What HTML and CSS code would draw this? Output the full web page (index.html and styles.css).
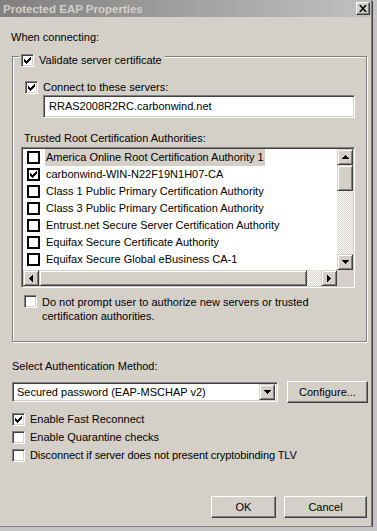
FILE: index.html
```html
<!DOCTYPE html>
<html lang="en">
<head>
    <meta charset="UTF-8">
    <title>Protected EAP Properties</title>
    <link rel="stylesheet" href="styles.css">
</head>
<body>
    <div class="window">
        <div class="titlebar">
            <span class="title">Protected EAP Properties</span>
            <span class="close">
                <svg width="8" height="7" viewBox="0 0 8 7"><path d="M0 0h2l2 2.5 2-2.5h2L5 3.5 8 7H6L4 4.5 2 7H0l3-3.5z" fill="#000"/></svg>
            </span>
        </div>

        <div class="content">
            <div class="text when">When connecting:</div>

            <div class="group">
                <div class="legend">
                    <span class="box checked"></span>
                    <span>Validate server certificate</span>
                </div>

                <div class="check connect">
                    <span class="box checked"></span>
                    <span>Connect to these servers:</span>
                </div>

                <div class="field">RRAS2008R2RC.carbonwind.net</div>

                <div class="text trusted">Trusted Root Certification Authorities:</div>

                <div class="listbox">
                    <ul class="items">
                        <li><span class="flatbox"></span><span class="name selected">America Online Root Certification Authority 1</span></li>
                        <li><span class="flatbox checked"></span><span class="name">carbonwind-WIN-N22F19N1H07-CA</span></li>
                        <li><span class="flatbox"></span><span class="name">Class 1 Public Primary Certification Authority</span></li>
                        <li><span class="flatbox"></span><span class="name">Class 3 Public Primary Certification Authority</span></li>
                        <li><span class="flatbox"></span><span class="name">Entrust.net Secure Server Certification Authority</span></li>
                        <li><span class="flatbox"></span><span class="name">Equifax Secure Certificate Authority</span></li>
                        <li><span class="flatbox"></span><span class="name">Equifax Secure Global eBusiness CA-1</span></li>
                    </ul>
                    <div class="vscroll">
                        <span class="sbtn arrow-up"></span>
                        <span class="vthumb"></span>
                        <span class="track"></span>
                        <span class="sbtn arrow-down"></span>
                    </div>
                    <div class="hscroll">
                        <span class="sbtn arrow-left"></span>
                        <span class="hthumb"></span>
                        <span class="track"></span>
                        <span class="sbtn arrow-right"></span>
                    </div>
                    <div class="corner"></div>
                </div>

                <div class="check noprompt">
                    <span class="box"></span>
                    <span>Do not prompt user to authorize new servers or trusted<br>certification authorities.</span>
                </div>
            </div>

            <div class="text select">Select Authentication Method:</div>

            <div class="method-row">
                <div class="combo">
                    <span class="combo-text">Secured password (EAP-MSCHAP v2)</span>
                    <span class="sbtn arrow-down combo-btn"></span>
                </div>
                <button class="btn configure">Configure...</button>
            </div>

            <div class="options">
                <div class="check"><span class="box checked"></span><span>Enable Fast Reconnect</span></div>
                <div class="check"><span class="box"></span><span>Enable Quarantine checks</span></div>
                <div class="check"><span class="box"></span><span class="tight">Disconnect if server does not present cryptobinding TLV</span></div>
            </div>

            <div class="actions">
                <button class="btn ok">OK</button>
                <button class="btn cancel">Cancel</button>
            </div>
        </div>
    </div>
</body>
</html>
```

FILE: styles.css
```css
html {
    background-color: #c4c4c4;
}

body {
    margin: 0;
    font-family: "Liberation Sans", Arial, sans-serif;
    font-size: 11px;
    color: #000;
}

.window {
    width: 372px;
    height: 527px;
    background-color: #d4d0c8;
    border-right: 1px solid #808080;
    border-bottom: 1px solid #808080;
    box-shadow: 1px 1px 0 #404040;
    box-sizing: border-box;
}

.titlebar {
    height: 17px;
    background: linear-gradient(to right, #808080, #c0c0c0);
    display: flex;
    align-items: center;
    justify-content: space-between;
    padding: 0 0 0 3px;
}

.title {
    color: #d4d0c8;
    font-weight: bold;
    font-size: 11.5px;
}

.close {
    width: 14px;
    height: 13px;
    margin-right: 1px;
    box-sizing: border-box;
    display: flex;
    align-items: center;
    justify-content: center;
    border: 1px solid;
    border-color: #fff #404040 #404040 #fff;
    box-shadow: inset -1px -1px 0 #808080;
    background-color: #d4d0c8;
}

.content {
    padding: 0 0 0 12px;
}

.text {
    line-height: 13px;
    white-space: nowrap;
}

.when {
    margin-top: 14px;
    margin-left: -1px;
}

/* group box with etched border */
.group {
    margin-top: 12px;
    width: 355px;
    height: 286px;
    box-sizing: border-box;
    border: 1px solid #808080;
    box-shadow: inset 1px 1px 0 #fff, 1px 1px 0 #fff;
    padding: 0 0 0 12px;
}

.legend {
    display: inline-flex;
    align-items: center;
    gap: 5px;
    margin-top: -9px;
    margin-left: -6px;
    padding: 0 3px 0 2px;
    background-color: #d4d0c8;
    line-height: 13px;
    white-space: nowrap;
}

.check {
    display: flex;
    align-items: center;
    gap: 5px;
    line-height: 13px;
    white-space: nowrap;
}

.box {
    width: 13px;
    height: 13px;
    flex: none;
    box-sizing: border-box;
    background-color: #fff;
    border: 1px solid;
    border-color: #808080 #fff #fff #808080;
    box-shadow: inset 1px 1px 0 #404040, inset -1px -1px 0 #d4d0c8;
}

.box.checked,
.flatbox.checked {
    background-image: url("data:image/svg+xml;utf8,<svg xmlns='http://www.w3.org/2000/svg' width='7' height='7'><path d='M0 2h1v1h1v1h1V3h1V2h1V1h1V0h1v3H6v1H5v1H4v1H3v1H2V6H1V5H0z' fill='black'/></svg>");
    background-repeat: no-repeat;
    background-position: 2px 2px;
}

.connect {
    margin-top: 12px;
}

.field {
    margin-top: 1px;
    margin-left: 18px;
    width: 312px;
    height: 23px;
    box-sizing: border-box;
    background-color: #fff;
    border: 1px solid;
    border-color: #808080 #fff #fff #808080;
    box-shadow: inset 1px 1px 0 #404040, inset -1px -1px 0 #d4d0c8;
    padding: 0 0 0 5px;
    line-height: 21px;
}

.trusted {
    margin-top: 14px;
    margin-left: -1px;
}

/* certificate list */
.listbox {
    margin-top: 2px;
    margin-left: -4px;
    width: 334px;
    height: 141px;
    box-sizing: border-box;
    border: 1px solid;
    border-color: #808080 #fff #fff #808080;
    box-shadow: inset 1px 1px 0 #404040, inset -1px -1px 0 #d4d0c8;
    padding: 1px;
    background-color: #fff;
    display: grid;
    grid-template-columns: 1fr 16px;
    grid-template-rows: 1fr 16px;
}

.items {
    list-style: none;
    margin: 0;
    padding: 0;
    overflow: hidden;
}

.items li {
    height: 17px;
    display: flex;
    align-items: center;
    white-space: nowrap;
    padding-left: 4px;
}

.flatbox {
    width: 13px;
    height: 13px;
    flex: none;
    box-sizing: border-box;
    border: 2px solid #000;
    background-color: #fff;
}

.flatbox.checked {
    background-position: 1px 1px;
}

.name {
    margin-left: 5px;
    padding: 0 1px;
    line-height: 17px;
}

.name.selected {
    background-color: #d4d0c8;
}

.vscroll {
    display: flex;
    flex-direction: column;
}

.hscroll {
    display: flex;
}

.corner {
    background-color: #d4d0c8;
}

.sbtn,
.vthumb,
.hthumb {
    box-sizing: border-box;
    background-color: #d4d0c8;
    border: 1px solid;
    border-color: #d4d0c8 #404040 #404040 #d4d0c8;
    box-shadow: inset 1px 1px 0 #fff, inset -1px -1px 0 #808080;
}

.sbtn {
    width: 16px;
    height: 16px;
    flex: none;
    background-repeat: no-repeat;
    background-position: center;
}

.arrow-up {
    background-image: url("data:image/svg+xml;utf8,<svg xmlns='http://www.w3.org/2000/svg' width='7' height='4'><path d='M3 0h1v1h1v1h1v1h1v1H0V3h1V2h1V1h1z' fill='black'/></svg>");
}

.arrow-down {
    background-image: url("data:image/svg+xml;utf8,<svg xmlns='http://www.w3.org/2000/svg' width='7' height='4'><path d='M0 0h7v1H6v1H5v1H4v1H3V3H2V2H1V1H0z' fill='black'/></svg>");
}

.arrow-left {
    background-image: url("data:image/svg+xml;utf8,<svg xmlns='http://www.w3.org/2000/svg' width='4' height='7'><path d='M3 0h1v7H3V6H2V5H1V4H0V3h1V2h1V1h1z' fill='black'/></svg>");
}

.arrow-right {
    background-image: url("data:image/svg+xml;utf8,<svg xmlns='http://www.w3.org/2000/svg' width='4' height='7'><path d='M0 0h1v1h1v1h1v1h1v1H3v1H2v1H1v1H0z' fill='black'/></svg>");
}

.vthumb {
    height: 26px;
    flex: none;
}

.hthumb {
    width: 268px;
    flex: none;
}

.track {
    flex: 1;
    background: repeating-conic-gradient(#fff 0 25%, #d4d0c8 0 50%) 0 0 / 2px 2px;
}

.noprompt {
    margin-top: 7px;
    margin-left: -1px;
    align-items: flex-start;
    line-height: 14px;
}

.select {
    margin-top: 18px;
}

.method-row {
    display: flex;
    align-items: center;
    gap: 9px;
    margin-top: 8px;
}

.combo {
    width: 266px;
    height: 20px;
    box-sizing: border-box;
    background-color: #fff;
    border: 1px solid;
    border-color: #808080 #fff #fff #808080;
    box-shadow: inset 1px 1px 0 #404040, inset -1px -1px 0 #d4d0c8;
    padding: 2px;
    display: flex;
    align-items: center;
    justify-content: space-between;
}

.combo-text {
    padding-left: 2px;
}

.combo-btn {
    width: 16px;
    height: 16px;
}

.btn {
    font-family: inherit;
    font-size: 11px;
    color: #000;
    box-sizing: border-box;
    height: 22px;
    padding: 0;
    background-color: #d4d0c8;
    border: 1px solid;
    border-color: #fff #404040 #404040 #fff;
    box-shadow: inset -1px -1px 0 #808080;
}

.configure {
    width: 81px;
}

.options {
    margin-top: 10px;
    display: flex;
    flex-direction: column;
    gap: 5px;
}

.tight {
    letter-spacing: -0.1px;
}

.actions {
    display: flex;
    justify-content: flex-end;
    gap: 8px;
    margin-top: 34px;
    padding-right: 4px;
}

.ok {
    width: 65px;
}

.cancel {
    width: 83px;
}
```
